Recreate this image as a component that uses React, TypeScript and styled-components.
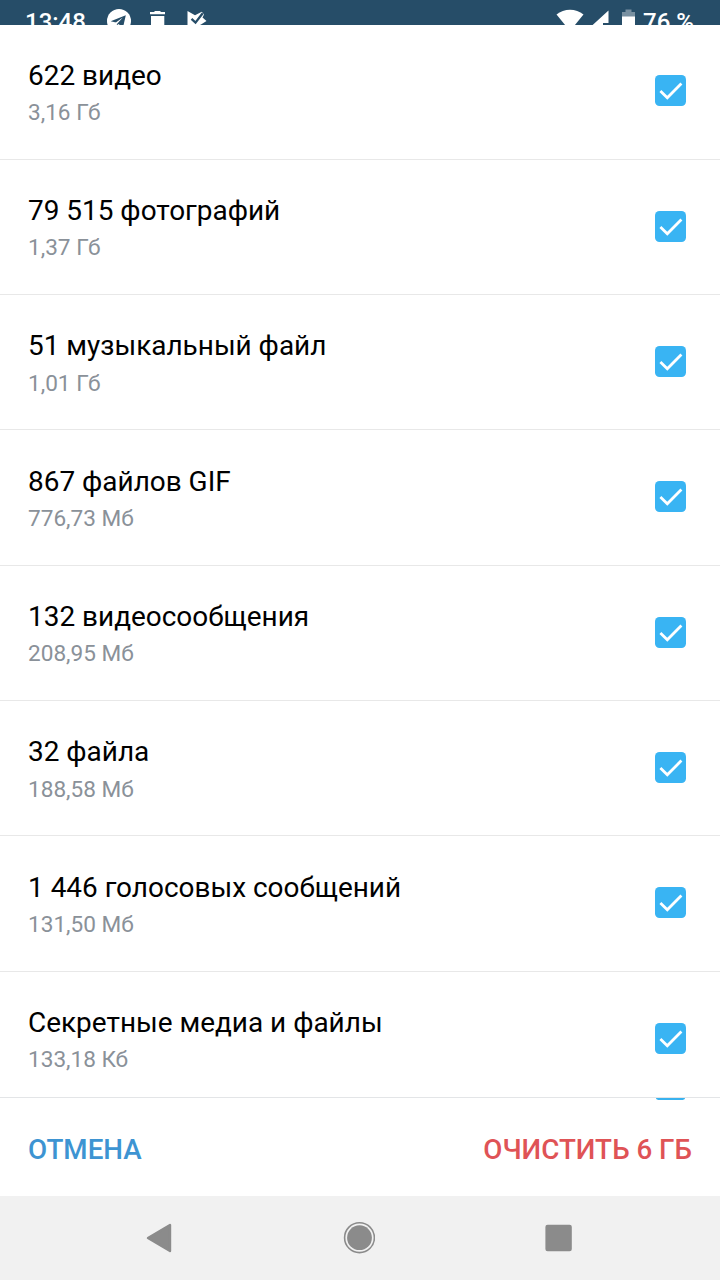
import React from "react";
import styled, { createGlobalStyle } from "styled-components";

const GlobalStyle = createGlobalStyle`
  * { box-sizing: border-box; }
  body { margin: 0; background: #fff; font-family: Roboto, "Liberation Sans", sans-serif; }
`;

const Screen = styled.div`
  width: 720px;
  height: 1280px;
  display: flex;
  flex-direction: column;
  overflow: hidden;
  background: #fff;
`;

const StatusBar = styled.header`
  height: 25px;
  flex: none;
  display: flex;
  justify-content: space-between;
  align-items: flex-start;
  padding: 0 25px 0 25px;
  background: #264d68;
  color: #fff;
  overflow: hidden;
`;

const StatusGroup = styled.div`
  display: flex;
  align-items: flex-start;
`;

const StatusText = styled.span<{ $width: number; $gap?: number }>`
  width: ${(p) => p.$width}px;
  margin-left: ${(p) => p.$gap ?? 0}px;
  padding-top: 8px;
  font-size: 24px;
  line-height: 28px;
  font-weight: 500;
  white-space: nowrap;
`;

const StatusIcon = styled.svg<{ $gap: number }>`
  display: block;
  flex: none;
  margin-left: ${(p) => p.$gap}px;
`;

const List = styled.main`
  height: 1072px;
  flex: none;
  display: flex;
  flex-direction: column;
  overflow: hidden;
`;

const Row = styled.label<{ $first?: boolean }>`
  height: ${(p) => (p.$first ? 134.6 : 135.33)}px;
  flex: none;
  display: flex;
  justify-content: space-between;
  align-items: flex-start;
  padding: ${(p) => (p.$first ? 33.6 : 34.33)}px 34px 0 28px;
  border-bottom: 1px solid #e8e8e8;
`;

const RowText = styled.div`
  display: flex;
  flex-direction: column;
`;

const Title = styled.span`
  font-size: 27.95px;
  line-height: 33px;
  color: #000;
`;

const Size = styled.span`
  margin-top: 7.4px;
  font-size: 22.6px;
  line-height: 27px;
  color: #8a9199;
`;

const CheckBox = styled.svg`
  display: block;
  margin-top: 16.8px;
`;

const Footer = styled.footer`
  position: relative;
  height: 99px;
  flex: none;
  display: flex;
  justify-content: space-between;
  align-items: center;
  padding: 4px 28px 0;
  border-top: 1px solid #e3e5e7;
`;

const NextCheck = styled.span`
  position: absolute;
  top: 0;
  right: 35px;
  width: 29px;
  height: 2px;
  border-radius: 0 0 4px 4px / 0 0 2px 2px;
  background: #39b2ef;
`;

const Action = styled.button<{ $color: string }>`
  border: 0;
  padding: 0;
  background: none;
  font: 500 27.75px/33px Roboto, "Liberation Sans", sans-serif;
  color: ${(p) => p.$color};
`;

const NavBar = styled.nav`
  height: 84px;
  flex: none;
  display: flex;
  justify-content: space-between;
  align-items: center;
  padding: 0 147px 0 146px;
  background: #f1f1f1;
`;

const NavIcon = styled.svg`
  display: block;
`;

const items = [
  ["622 видео", "3,16 Гб"],
  ["79 515 фотографий", "1,37 Гб"],
  ["51 музыкальный файл", "1,01 Гб"],
  ["867 файлов GIF", "776,73 Мб"],
  ["132 видеосообщения", "208,95 Мб"],
  ["32 файла", "188,58 Мб"],
  ["1 446 голосовых сообщений", "131,50 Мб"],
  ["Секретные медиа и файлы", "133,18 Кб"],
];

function Check() {
  return (
    <CheckBox width="31" height="31" viewBox="0 0 31 31">
      <rect width="31" height="31" rx="4.5" fill="#39b4f3" />
      <path d="M5.4 16 12.3 22.7 26.4 8.6" fill="none" stroke="#fff" strokeWidth="2.8" />
    </CheckBox>
  );
}

export default function App() {
  return (
    <Screen>
      <GlobalStyle />
      <StatusBar>
        <StatusGroup>
          <StatusText $width={61}>13:48</StatusText>
          <StatusIcon $gap={21} width="24" height="33" viewBox="0 0 24 33">
            <circle cx="12" cy="21" r="12" fill="#fff" />
            <path d="M3.7 21.3 18.8 15.2 16 27.5 11.5 24 9 26V22.5Z" fill="#264d68" />
            <path d="m8.5 22.8 7.3-5.2-5.6 6.2-.8 2Z" fill="#fff" />
          </StatusIcon>
          <StatusIcon $gap={19} width="16" height="33" viewBox="0 0 16 33">
            <path d="M0 12h4l1-1h5l1 1h4v2.2H0ZM1 16h13.3V30H1Z" fill="#fff" />
          </StatusIcon>
          <StatusIcon $gap={21} width="20" height="33" viewBox="0 0 20 33">
            <path d="M.5 11 8 15.2 14.8 11.7 17 14.5 15.5 17.5 19.5 21 14 24.5.5 31Z" fill="#fff" />
            <path d="m4.5 18.8 4 3.8 7.2-9.4" fill="none" stroke="#264d68" strokeWidth="2.3" />
          </StatusIcon>
        </StatusGroup>
        <StatusGroup>
          <StatusIcon $gap={0} width="28" height="33" viewBox="0 0 28 33">
            <path d="M.5 14.5C8 8 20 8 27.5 14.5L14 31Z" fill="#fff" />
          </StatusIcon>
          <StatusIcon $gap={8} width="18" height="33" viewBox="0 0 18 33">
            <path d="M16.5 10.5v12.5h-5.5v9H-1v-5.5Z" fill="#fff" />
          </StatusIcon>
          <StatusIcon $gap={12} width="13" height="33" viewBox="0 0 13 33">
            <path d="M0 12h3.5V9.5h6V12H13v5H0Z" fill="#7890a1" />
            <path d="M0 16.5h13V32H0Z" fill="#fff" />
          </StatusIcon>
          <StatusText $gap={8} $width={52}>76 %</StatusText>
        </StatusGroup>
      </StatusBar>
      <List>
        {items.map(([title, size], i) => (
          <Row key={title} $first={i === 0}>
            <RowText>
              <Title>{title}</Title>
              <Size>{size}</Size>
            </RowText>
            <Check />
          </Row>
        ))}
      </List>
      <Footer>
        <NextCheck />
        <Action $color="#3d94d2">ОТМЕНА</Action>
        <Action $color="#df5356">ОЧИСТИТЬ 6 ГБ</Action>
      </Footer>
      <NavBar>
        <NavIcon width="26" height="30" viewBox="0 0 26 30">
          <path d="M2 15 24 2v26Z" fill="#8b8b8b" stroke="#8b8b8b" strokeWidth="2.4" strokeLinejoin="round" />
        </NavIcon>
        <NavIcon width="32" height="32" viewBox="0 0 32 32">
          <circle cx="16.5" cy="15.7" r="14.9" fill="none" stroke="#8b8b8b" strokeWidth="1.6" />
          <circle cx="16.5" cy="15.7" r="12.4" fill="#8b8b8b" />
        </NavIcon>
        <NavIcon width="28" height="28" viewBox="0 0 28 28">
          <rect x=".4" y=".8" width="26.4" height="26.4" rx="2.2" fill="#8b8b8b" />
        </NavIcon>
      </NavBar>
    </Screen>
  );
}
